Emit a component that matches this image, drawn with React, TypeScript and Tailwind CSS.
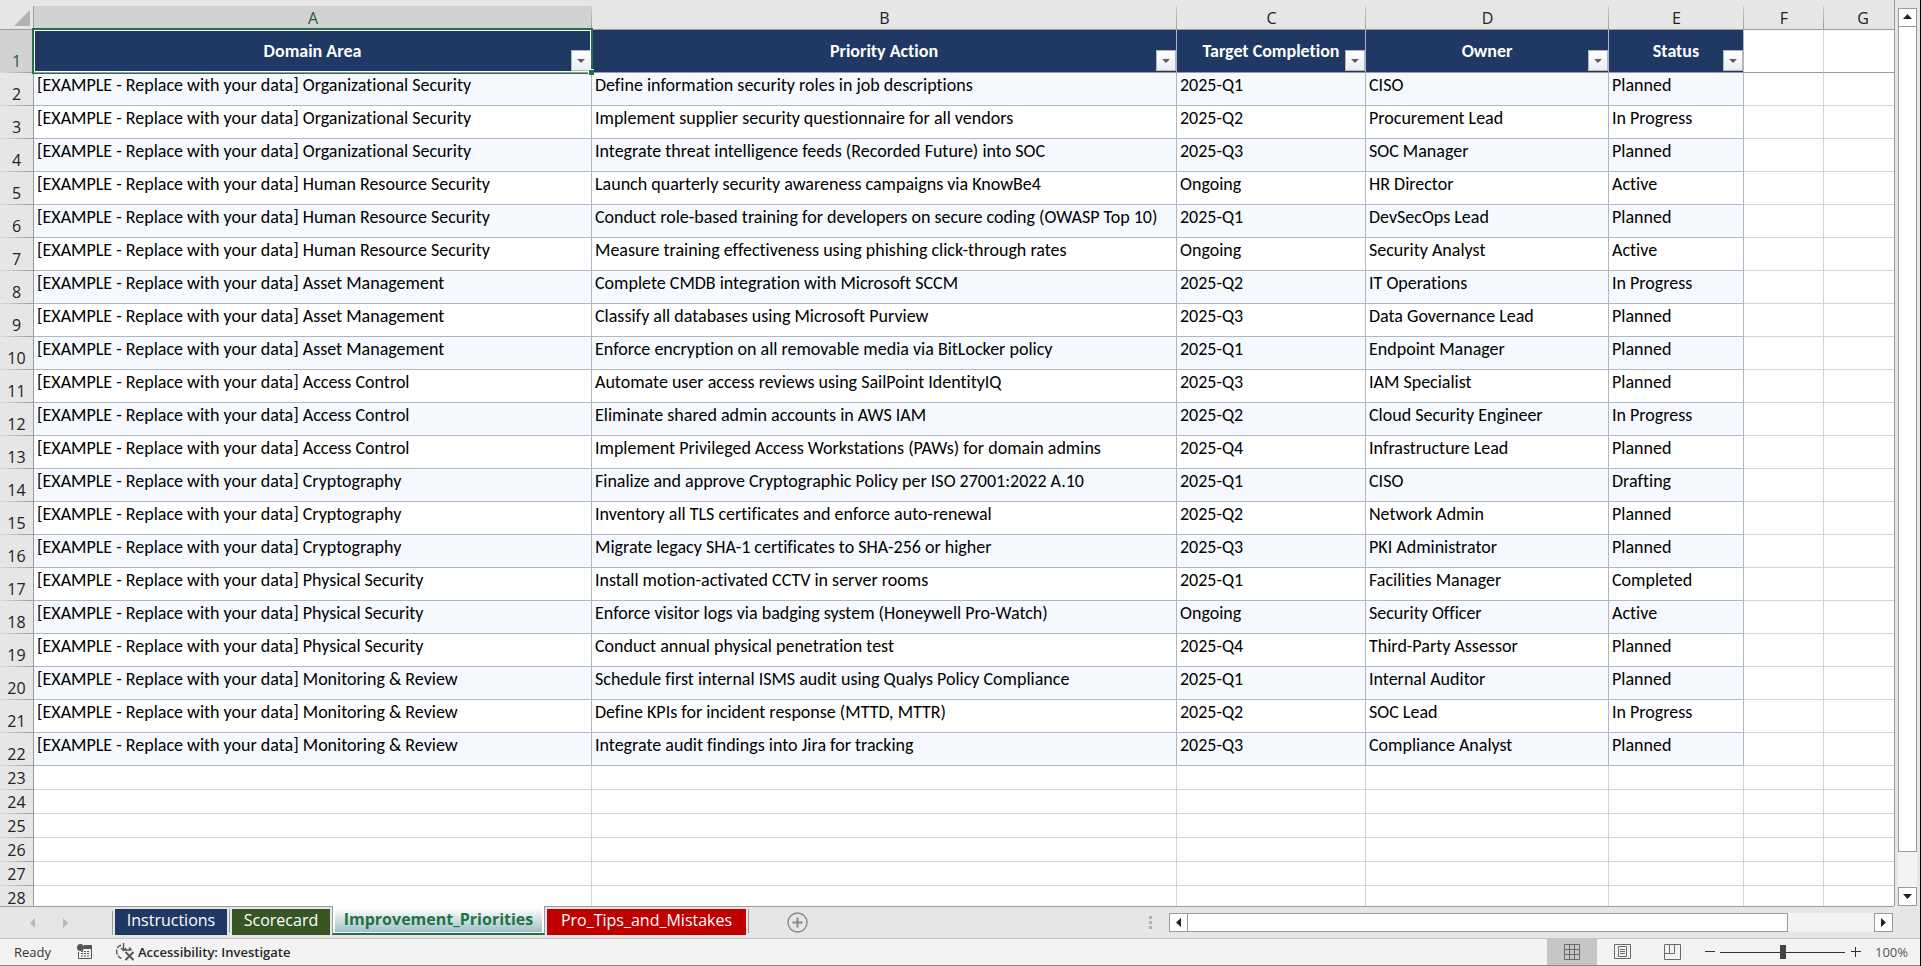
type Action = [domain: string, action: string, target: string, owner: string, status: string];

const actions: Action[] = [
  ['Organizational Security', 'Define information security roles in job descriptions', '2025-Q1', 'CISO', 'Planned'],
  ['Organizational Security', 'Implement supplier security questionnaire for all vendors', '2025-Q2', 'Procurement Lead', 'In Progress'],
  ['Organizational Security', 'Integrate threat intelligence feeds (Recorded Future) into SOC', '2025-Q3', 'SOC Manager', 'Planned'],
  ['Human Resource Security', 'Launch quarterly security awareness campaigns via KnowBe4', 'Ongoing', 'HR Director', 'Active'],
  ['Human Resource Security', 'Conduct role-based training for developers on secure coding (OWASP Top 10)', '2025-Q1', 'DevSecOps Lead', 'Planned'],
  ['Human Resource Security', 'Measure training effectiveness using phishing click-through rates', 'Ongoing', 'Security Analyst', 'Active'],
  ['Asset Management', 'Complete CMDB integration with Microsoft SCCM', '2025-Q2', 'IT Operations', 'In Progress'],
  ['Asset Management', 'Classify all databases using Microsoft Purview', '2025-Q3', 'Data Governance Lead', 'Planned'],
  ['Asset Management', 'Enforce encryption on all removable media via BitLocker policy', '2025-Q1', 'Endpoint Manager', 'Planned'],
  ['Access Control', 'Automate user access reviews using SailPoint IdentityIQ', '2025-Q3', 'IAM Specialist', 'Planned'],
  ['Access Control', 'Eliminate shared admin accounts in AWS IAM', '2025-Q2', 'Cloud Security Engineer', 'In Progress'],
  ['Access Control', 'Implement Privileged Access Workstations (PAWs) for domain admins', '2025-Q4', 'Infrastructure Lead', 'Planned'],
  ['Cryptography', 'Finalize and approve Cryptographic Policy per ISO 27001:2022 A.10', '2025-Q1', 'CISO', 'Drafting'],
  ['Cryptography', 'Inventory all TLS certificates and enforce auto-renewal', '2025-Q2', 'Network Admin', 'Planned'],
  ['Cryptography', 'Migrate legacy SHA-1 certificates to SHA-256 or higher', '2025-Q3', 'PKI Administrator', 'Planned'],
  ['Physical Security', 'Install motion-activated CCTV in server rooms', '2025-Q1', 'Facilities Manager', 'Completed'],
  ['Physical Security', 'Enforce visitor logs via badging system (Honeywell Pro-Watch)', 'Ongoing', 'Security Officer', 'Active'],
  ['Physical Security', 'Conduct annual physical penetration test', '2025-Q4', 'Third-Party Assessor', 'Planned'],
  ['Monitoring & Review', 'Schedule first internal ISMS audit using Qualys Policy Compliance', '2025-Q1', 'Internal Auditor', 'Planned'],
  ['Monitoring & Review', 'Define KPIs for incident response (MTTD, MTTR)', '2025-Q2', 'SOC Lead', 'In Progress'],
  ['Monitoring & Review', 'Integrate audit findings into Jira for tracking', '2025-Q3', 'Compliance Analyst', 'Planned'],
];

const headers = ['Domain Area', 'Priority Action', 'Target Completion', 'Owner', 'Status'];
const columns = ['A', 'B', 'C', 'D', 'E', 'F', 'G'];
const emptyRows = [23, 24, 25, 26, 27, 28];

function ColumnHeader({ letter }: { letter: string }) {
  const selected = letter === 'A';
  const last = letter === 'G';
  return (
    <th
      scope="col"
      className={`h-6 border-b border-[#9b9b9b] bg-[length:1px_100%] bg-right bg-no-repeat py-0 pr-0 text-center font-normal leading-[22px] ${
        selected ? 'bg-[#d2d2d2] text-[#215c41]' : 'text-[#222]'
      } ${last ? 'pl-2' : 'bg-[linear-gradient(#cfcfcf,#9b9b9b)] pl-0'}`}
    >
      {letter}
    </th>
  );
}

function RowHeader({ n }: { n: number }) {
  const selected = n === 1;
  return (
    <th
      scope="row"
      className={`border-r border-[#9b9b9b] bg-[linear-gradient(to_right,#dcdcdc,#9b9b9b)] bg-[length:100%_1px] bg-bottom bg-no-repeat px-0 pt-0 pb-px text-center align-bottom font-normal leading-[22px] ${
        selected ? 'bg-[#d2d2d2] text-[#215c41]' : 'bg-[#e6e6e6] text-[#222]'
      }`}
    >
      {n}
    </th>
  );
}

function FilterButton({ label }: { label: string }) {
  return (
    <button
      aria-label={`Filter ${label}`}
      className="absolute right-0 bottom-px flex h-[21px] w-5 items-center justify-center border border-[#b1b5bd] bg-linear-to-b from-white to-[#eceef4]"
    >
      <svg width="8" height="4" viewBox="0 0 8 4">
        <path d="M0 0h8L4 4z" fill="#5f5f5f" />
      </svg>
    </button>
  );
}

function Sheet() {
  return (
    <table className="w-full table-fixed border-separate border-spacing-0 whitespace-nowrap">
      <colgroup>
        <col className="w-[34px]" />
        <col className="w-[558px]" />
        <col className="w-[585px]" />
        <col className="w-[189px]" />
        <col className="w-[243px]" />
        <col className="w-[135px]" />
        <col className="w-20" />
        <col />
      </colgroup>
      <thead>
        <tr>
          <td className="border-r border-b border-[#9b9b9b] p-0">
            <button aria-label="Select all" className="mr-[3px] ml-auto block">
              <svg width="16" height="16" viewBox="0 0 16 16">
                <path d="M16 0v16H0z" fill="#b2b2b2" />
              </svg>
            </button>
          </td>
          {columns.map((c) => (
            <ColumnHeader key={c} letter={c} />
          ))}
        </tr>
      </thead>
      <tbody className="bg-white">
        <tr className="h-[43px]">
          <RowHeader n={1} />
          {headers.map((h, i) => (
            <th
              key={h}
              className="relative border-r border-b border-r-[#b0b7c3] border-b-[#9b9b9b] bg-[#203864] p-0 font-[Carlito,Calibri,Lato,sans-serif] text-lg leading-[22px] font-bold text-white"
            >
              {h}
              <FilterButton label={h} />
              {i === 0 && (
                <div className="pointer-events-none absolute -inset-0.5 z-10 border-2 border-[#217346]">
                  <div className="h-full border border-white" />
                  <div className="absolute inset-x-0 -bottom-px h-px bg-[#9b9b9b]" />
                  <div className="absolute -right-[3px] -bottom-[3px] size-1.5 border-t border-l border-white bg-[#217346]" />
                </div>
              )}
            </th>
          ))}
          <td className="border-r border-b border-r-[#d4d4d4] border-b-[#9b9b9b]" />
          <td className="border-b border-[#9b9b9b]" />
        </tr>
        {actions.map(([domain, ...rest], r) => (
          <tr key={r} className="h-[33px]">
            <RowHeader n={r + 2} />
            {[`[EXAMPLE - Replace with your data] ${domain}`, ...rest].map((text, i) => (
              <td
                key={i}
                className={`border-r border-b border-[#b0b7c3] pt-px pr-0 pb-0 pl-[3px] align-top font-[Carlito,Calibri,Lato,sans-serif] text-lg leading-[22px] ${
                  r % 2 === 0 ? 'bg-[#f5f9fe]' : ''
                }`}
              >
                {text}
              </td>
            ))}
            <td className="border-r border-b border-[#d4d4d4]" />
            <td className="border-b border-[#d4d4d4]" />
          </tr>
        ))}
        {emptyRows.map((n) => (
          <tr key={n} className="h-6">
            <RowHeader n={n} />
            {columns.map((c) => (
              <td key={c} className={`border-b border-[#d4d4d4] ${c === 'G' ? '' : 'border-r'}`} />
            ))}
          </tr>
        ))}
      </tbody>
    </table>
  );
}

const arrows = {
  up: 'M0 6h9L4.5 1z',
  down: 'M0 2h9L4.5 7z',
  left: 'M7 0v9L2 4.5z',
  right: 'M2 0v9l5-4.5z',
};

function ScrollButton({ dir }: { dir: keyof typeof arrows }) {
  return (
    <button
      aria-label={`Scroll ${dir}`}
      className="flex size-[19px] shrink-0 items-center justify-center border border-[#9b9b9b] bg-white"
    >
      <svg width="9" height="9" viewBox="0 0 9 9">
        <path d={arrows[dir]} fill="#222" />
      </svg>
    </button>
  );
}

function TabBar() {
  return (
    <div className="flex h-[33px] border-b border-[#c6c6c6]">
      <div className="flex w-[113px] items-center gap-[26px] border-t border-[#9b9b9b] pl-[30px]">
        <button aria-label="Previous sheet">
          <svg width="6" height="10" viewBox="0 0 6 10">
            <path d="M5 0v10L0 5z" fill="#b8b8b8" />
          </svg>
        </button>
        <button aria-label="Next sheet">
          <svg width="6" height="10" viewBox="0 0 6 10">
            <path d="M1 0v10l5-5z" fill="#b8b8b8" />
          </svg>
        </button>
        <div className="ml-auto h-6 w-px bg-[#9b9b9b]" />
      </div>
      <div className="flex items-start gap-0.5 border-t border-[#9b9b9b] px-0.5 pt-0.5 text-white">
        <button className="h-[26px] w-28 bg-[#203864] pb-1 leading-[22px]">Instructions</button>
        <div className="h-6 w-px bg-[#9b9b9b]" />
        <button className="h-[26px] w-[98px] bg-[#375623] pb-1 leading-[22px]">Scorecard</button>
      </div>
      <div className="h-[29px] w-[213px] border-x border-b-2 border-x-[#9b9b9b] border-b-[#217346] bg-white px-0.5 pt-0.5 pb-px">
        <button className="block h-full w-full bg-linear-to-b from-white to-[#9fc1c5] pb-0.5 leading-[22px] font-bold text-[#217346]">
          Improvement_Priorities
        </button>
      </div>
      <div className="flex flex-1 items-start border-t border-[#9b9b9b]">
        <div className="flex gap-0.5 px-0.5 pt-0.5">
          <button className="h-[26px] w-[199px] bg-[#c00000] pb-1 leading-[22px] text-white">Pro_Tips_and_Mistakes</button>
          <div className="h-6 w-px bg-[#9b9b9b]" />
        </div>
        <button aria-label="New sheet" className="mt-[5px] ml-9">
          <svg width="21" height="21" viewBox="0 0 21 21" fill="none" stroke="#8a8a8a">
            <circle cx="10.5" cy="10.5" r="9.5" strokeWidth="1.4" />
            <path d="M10.5 5.5v10M5.5 10.5h10" strokeWidth="2" />
          </svg>
        </button>
        <div className="mt-[9px] ml-auto flex flex-col gap-0.5 pr-[17px]">
          <i className="h-[3px] w-[3px] bg-[#b0b0b0]" />
          <i className="h-[3px] w-[3px] bg-[#b0b0b0]" />
          <i className="h-[3px] w-[3px] bg-[#b0b0b0]" />
        </div>
        <div className="mt-1.5 mr-px flex w-[724px] bg-[#f3f3f3]">
          <ScrollButton dir="left" />
          <div className="-ml-px mr-auto w-[83%] border border-[#9b9b9b] bg-white" />
          <ScrollButton dir="right" />
        </div>
      </div>
      <div className="w-[26px]" />
    </div>
  );
}

function StatusBar() {
  return (
    <div className="flex h-[27px] items-center border-b border-[#8c8c8c] bg-[#f3f3f3] text-[13px] leading-4 text-[#333]">
      <span className="ml-[14px] w-[63px] pb-px">Ready</span>
      <button aria-label="Record macro">
        <svg width="16" height="16" viewBox="0 0 16 16">
          <path d="M7 1h8v4H7z" fill="#555" />
          <path d="M1.500 8v6.500h13V4" fill="none" stroke="#555" />
          <circle cx="3.500" cy="3.500" r="3.500" fill="#555" />
          <path d="M4 7.500h9M4 9.500h9M4 12h9" stroke="#555" strokeDasharray="2 1" />
        </svg>
      </button>
      <button className="ml-[22px] flex items-center gap-[3px] font-semibold text-[#262626]">
        <svg width="20" height="18" viewBox="0 0 20 18" fill="none" stroke="#555" strokeWidth="1.4">
          <path d="M6 2C0 4 0 13 6.500 15.500" strokeDasharray="5 1.500" />
          <path d="M8.500 0v7M6 5l2.500 2.500L11 5M9 7h7M14 4.500L16.500 7" />
          <path d="M10.500 9l8 8M18.500 9l-8 8" strokeWidth="2" />
        </svg>
        <span className="pb-px">Accessibility: Investigate</span>
      </button>
      <div className="ml-auto flex h-full items-center text-[#6a6a6a]">
        <button aria-label="Normal view" className="flex h-full w-[50px] items-center justify-center bg-[#c6c6c6]">
          <svg width="16" height="16" viewBox="0 0 16 16" fill="none" stroke="currentColor">
            <path d="M.5.5h15v15H.5zM.5 5.5h15M.5 10.5h15M5.5 0v16M10.5 0v16" />
          </svg>
        </button>
        <button aria-label="Page layout" className="flex h-full w-[50px] items-center justify-center">
          <svg width="17" height="16" viewBox="0 0 17 16" fill="none" stroke="currentColor">
            <path d="M.5.5h16v14H.5zM4.5 2.5h8v10h-8zM6 5.5h5M6 7.5h5M6 9.5h5" />
          </svg>
        </button>
        <button aria-label="Page break preview" className="flex h-full w-[50px] items-center justify-center">
          <svg width="17" height="16" viewBox="0 0 17 16" fill="none" stroke="currentColor">
            <path d="M.5.5h16v15H.5zM.5 9.5h10v-9M5.5.5v9" />
          </svg>
        </button>
        <button aria-label="Zoom out" className="ml-0.5 flex w-[21px] justify-center">
          <svg width="10" height="10" viewBox="0 0 10 10">
            <path d="M0 4.5h10" stroke="#333" />
          </svg>
        </button>
        <input
          type="range"
          aria-label="Zoom"
          defaultValue={50}
          className="h-[14px] w-[125px] appearance-none bg-[linear-gradient(#333,#333)] bg-[length:100%_1px] bg-center bg-no-repeat [&::-webkit-slider-thumb]:h-[14px] [&::-webkit-slider-thumb]:w-1.5 [&::-webkit-slider-thumb]:appearance-none [&::-webkit-slider-thumb]:bg-[#444]"
        />
        <button aria-label="Zoom in" className="flex w-[22px] justify-center">
          <svg width="10" height="10" viewBox="0 0 10 10">
            <path d="M0 4.5h10M4.5 0v10" stroke="#333" />
          </svg>
        </button>
        <button className="w-[53px] pr-3 text-right text-[#555]">100%</button>
      </div>
    </div>
  );
}

export default function App() {
  return (
    <div className="flex h-screen flex-col overflow-hidden border-r border-black bg-[#e6e6e6] font-['Open_Sans',sans-serif] text-base text-black [font-variant-ligatures:none]">
      <div className="flex min-h-0 flex-1">
        <div className="min-w-0 flex-1 overflow-hidden border-r border-[#9b9b9b] pt-1.5">
          <Sheet />
        </div>
        <div className="mx-[3px] flex flex-col bg-[#f3f3f3]">
          <div className="h-2 bg-[#e6e6e6]" />
          <ScrollButton dir="up" />
          <div className="mb-[35px] flex-1 border border-t-0 border-[#9b9b9b] bg-white" />
          <ScrollButton dir="down" />
        </div>
      </div>
      <TabBar />
      <StatusBar />
    </div>
  );
}
